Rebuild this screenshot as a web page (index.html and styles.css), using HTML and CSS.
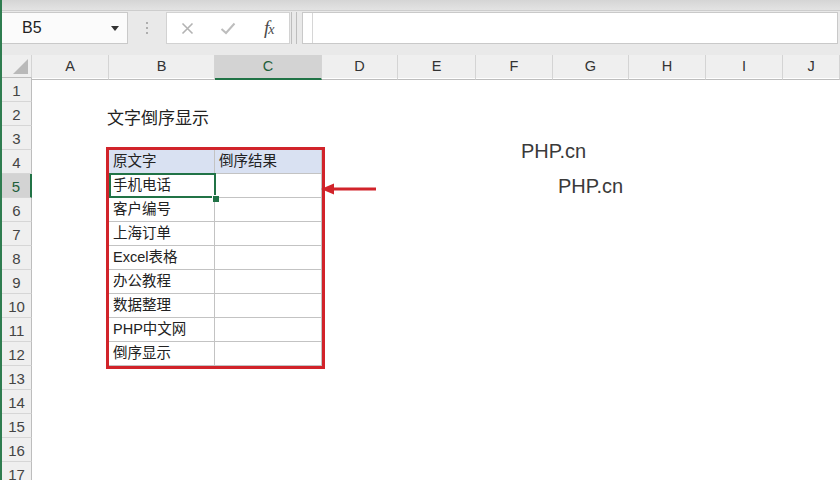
FILE: index.html
```html
<!DOCTYPE html>
<html lang="zh-CN">
<head>
    <meta charset="UTF-8">
    <meta name="viewport" content="width=device-width, initial-scale=1.0">
    <title>文字倒序显示</title>
    <link rel="stylesheet" href="styles.css">
</head>
<body>
    <div class="app">
        <div class="title-band"></div>

        <div class="formula-bar">
            <div class="name-box">
                <span>B5</span>
                <span class="caret"></span>
            </div>
            <div class="grip"><i></i><i></i><i></i></div>
            <div class="fx-buttons">
                <span class="fx-btn">
                    <svg width="13" height="13" viewBox="0 0 13 13"><path d="M1.5 1.5 L11.5 11.5 M11.5 1.5 L1.5 11.5" stroke="#b3b3b3" stroke-width="1.6" fill="none"/></svg>
                </span>
                <span class="fx-btn">
                    <svg width="16" height="13" viewBox="0 0 16 13"><path d="M1.5 7 L6 11 L14.5 1.5" stroke="#bdbdbd" stroke-width="2" fill="none"/></svg>
                </span>
                <span class="fx-btn fx">f<span class="fx-x">x</span></span>
            </div>
            <div class="splitter"></div>
            <div class="formula-input">
                <div class="formula-edit"></div>
            </div>
        </div>

        <div class="sheet">
            <div class="row-heads">
                <div class="corner">
                    <svg width="15" height="15" viewBox="0 0 15 15"><polygon points="15,0 15,15 0,15" fill="#b9b9b9"/></svg>
                </div>
                <div class="rh">1</div>
                <div class="rh">2</div>
                <div class="rh">3</div>
                <div class="rh">4</div>
                <div class="rh active">5</div>
                <div class="rh">6</div>
                <div class="rh">7</div>
                <div class="rh">8</div>
                <div class="rh">9</div>
                <div class="rh">10</div>
                <div class="rh">11</div>
                <div class="rh">12</div>
                <div class="rh">13</div>
                <div class="rh">14</div>
                <div class="rh">15</div>
                <div class="rh">16</div>
                <div class="rh">17</div>
            </div>

            <div class="grid">
                <div class="col-heads">
                    <div class="ch">A</div>
                    <div class="ch">B</div>
                    <div class="ch active">C</div>
                    <div class="ch">D</div>
                    <div class="ch">E</div>
                    <div class="ch">F</div>
                    <div class="ch">G</div>
                    <div class="ch">H</div>
                    <div class="ch">I</div>
                    <div class="ch">J</div>
                </div>

                <div class="cells">
                    <div class="sheet-title">文字倒序显示</div>

                    <div class="tbl">
                        <div class="cell head">原文字</div>
                        <div class="cell head">倒序结果</div>
                        <div class="cell active">手机电话</div>
                        <div class="cell"></div>
                        <div class="cell">客户编号</div>
                        <div class="cell"></div>
                        <div class="cell">上海订单</div>
                        <div class="cell"></div>
                        <div class="cell">Excel表格</div>
                        <div class="cell"></div>
                        <div class="cell">办公教程</div>
                        <div class="cell"></div>
                        <div class="cell">数据整理</div>
                        <div class="cell"></div>
                        <div class="cell">PHP中文网</div>
                        <div class="cell"></div>
                        <div class="cell">倒序显示</div>
                        <div class="cell"></div>
                    </div>

                    <!-- annotation arrow pointing at C5 -->
                    <svg class="arrow" width="56" height="14" viewBox="0 0 56 14">
                        <polygon points="0,7 13,1.5 13,12.5" fill="#d1232a"/>
                        <rect x="12" y="5.5" width="43" height="3" fill="#d1232a"/>
                    </svg>

                    <div class="mark mark-1">PHP.cn</div>
                    <div class="mark mark-2">PHP.cn</div>
                </div>
            </div>
        </div>
    </div>
</body>
</html>
```

FILE: styles.css
```css
body {
    margin: 0;
    font-family: "Liberation Sans", "Noto Sans CJK SC", sans-serif;
    background-color: #fff;
}
.app {
    height: 480px;
    overflow: hidden;
    border-left: 2px solid #2f7d50;
}

/* formula bar */
.title-band {
    height: 10px;
    background: linear-gradient(#d5d5d5, #e3e3e3);
    border-bottom: 1px solid #cdcdcd;
}
.formula-bar {
    display: flex;
    height: 32px;
    padding: 1px 0 11px;
    background-color: #e9e9e9;
}
.name-box {
    width: 126px;
    box-sizing: border-box;
    display: flex;
    align-items: center;
    justify-content: space-between;
    padding: 0 8px 0 20px;
    background-color: #fbfbfb;
    border: 1px solid #c9c9c9;
    border-left: none;
    font-size: 16px;
    color: #222;
}
.caret {
    border-left: 4px solid transparent;
    border-right: 4px solid transparent;
    border-top: 5px solid #333;
}
.grip {
    width: 38px;
    display: flex;
    flex-direction: column;
    align-items: center;
    justify-content: center;
    gap: 3px;
}
.grip i {
    width: 2px;
    height: 2px;
    border-radius: 50%;
    background-color: #9a9a9a;
}
.fx-buttons {
    width: 124px;
    box-sizing: border-box;
    display: flex;
    background-color: #fff;
    border: 1px solid #d2d2d2;
}
.fx-btn {
    width: 44px;
    display: flex;
    align-items: center;
    justify-content: center;
}
.fx {
    font-family: "Liberation Serif", serif;
    font-style: italic;
    font-size: 19px;
    color: #4a4a4a;
    letter-spacing: -1px;
}
.fx-x {
    font-size: 14px;
    position: relative;
    top: 2px;
}
.splitter {
    width: 4px;
    margin: 0 5px 0 1px;
    border-left: 1px solid #bdbdbd;
    border-right: 1px solid #bdbdbd;
}
.formula-input {
    flex: 1;
    margin-right: 2px;
    background-color: #fff;
    border: 1px solid #c9c9c9;
}
.formula-edit {
    height: 100%;
    margin-left: 9px;
    border-left: 1px solid #d6d6d6;
}

/* sheet */
.sheet {
    display: flex;
}
.row-heads {
    width: 30px;
    flex: none;
    background-color: #efefef;
}
.corner {
    height: 23px;
    box-sizing: border-box;
    display: flex;
    align-items: flex-end;
    justify-content: flex-end;
    padding: 0 3px 3px 0;
    border-right: 1px solid #d4d4d4;
    border-bottom: 1px solid #bdbdbd;
}
.rh {
    height: 24px;
    box-sizing: border-box;
    border-bottom: 1px solid #d6d6d6;
    border-right: 1px solid #bdbdbd;
    text-align: center;
    line-height: 25px;
    font-size: 15px;
    color: #444;
}
.rh.active {
    background-color: #d3d3d3;
    border-right: 2px solid #217346;
    color: #1f5f3b;
}
.grid {
    flex: 1;
    min-width: 0;
}
.col-heads {
    display: grid;
    grid-template-columns: 77px 106px 107px 76px 78px 77px 76px 77px 77px 1fr;
    height: 23px;
    background-color: #efefef;
}
.ch {
    box-sizing: border-box;
    border-right: 1px solid #d4d4d4;
    border-bottom: 1px solid #bdbdbd;
    text-align: center;
    line-height: 23px;
    font-size: 14.5px;
    color: #333;
}
.ch.active {
    background-color: #d3d3d3;
    border-bottom: 2px solid #217346;
    color: #1f5f3b;
}
.cells {
    position: relative;
    display: flow-root;
    height: 402px;
}
.sheet-title {
    height: 24px;
    box-sizing: border-box;
    margin: 24px 0 0 75px;
    padding-top: 8px;
    line-height: 18px;
    font-size: 17px;
    color: #222;
}
.tbl {
    width: 213px;
    margin: 24px 0 0 77px;
    display: grid;
    grid-template-columns: 106px 107px;
    grid-auto-rows: 24px;
    outline: 3px solid #d1232a;
}
.cell {
    position: relative;
    box-sizing: border-box;
    padding-left: 4px;
    border-right: 1px solid #c3c3c3;
    border-bottom: 1px solid #c3c3c3;
    line-height: 23px;
    font-size: 14.5px;
    color: #222;
    white-space: nowrap;
}
.cell.head {
    background-color: #d9e1f2;
}
.cell.active {
    z-index: 1;
}
.cell.active::before {
    content: "";
    position: absolute;
    top: -1px;
    left: 0;
    right: -2px;
    bottom: -1px;
    border: 2px solid #217346;
}
.cell.active::after {
    content: "";
    position: absolute;
    right: -5px;
    bottom: -5px;
    width: 6px;
    height: 6px;
    background-color: #217346;
    border-top: 1px solid #fff;
    border-left: 1px solid #fff;
}
.arrow {
    position: absolute;
    left: 289px;
    top: 104px;
}
.mark {
    position: absolute;
    font-size: 20px;
    line-height: 1;
    color: #3a3a3a;
}
.mark-1 {
    left: 489px;
    top: 63px;
}
.mark-2 {
    left: 526px;
    top: 98px;
}
```
